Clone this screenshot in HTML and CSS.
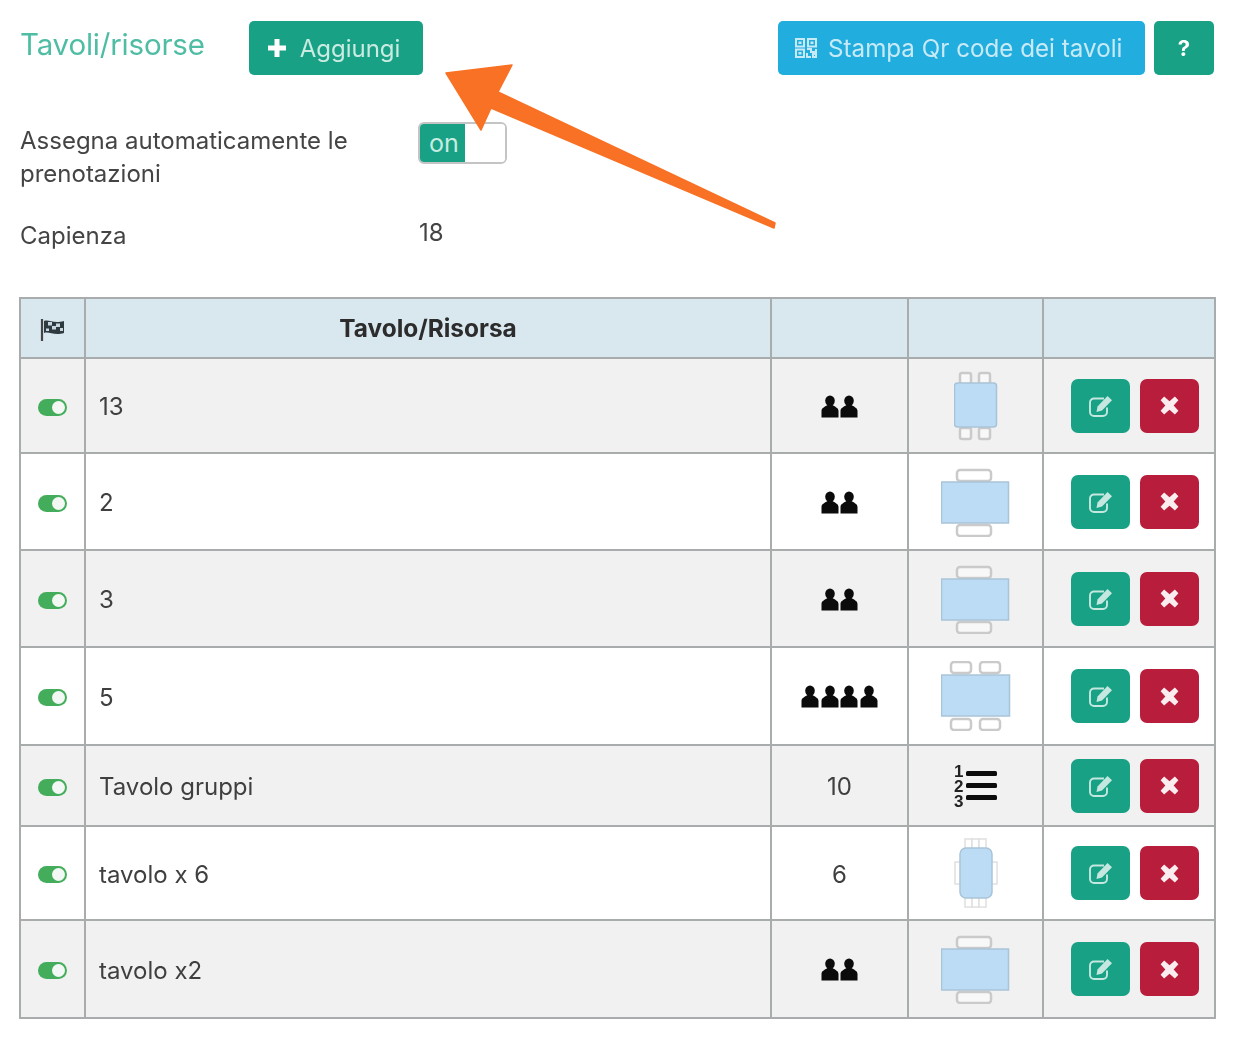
FILE: index.html
```html
<!DOCTYPE html>
<html lang="it">
<head>
<meta charset="utf-8">
<title>Tavoli/risorse</title>
<link rel="stylesheet" href="styles.css">
</head>
<body>
<svg class="defs" width="0" height="0" aria-hidden="true">
  <defs>
    <symbol id="person" viewBox="0 0 18 23"><ellipse cx="9" cy="5.800" rx="4.800" ry="5.400"/><path d="M0.500 22.500 V16 C0.500 13 3.500 12 6.500 10 H11.500 C14.500 12 17.500 13 17.500 16 V22.500 Z"/></symbol>
    <symbol id="edit" viewBox="0 0 26 24"><path d="M19 13.500v4.500a4 4 0 0 1-4 4H6a4 4 0 0 1-4-4V8.500a4 4 0 0 1 4-4h10" fill="none" stroke="currentColor" stroke-width="1.900"/><path d="M9.500 12.500 L19.500 2 L24 6.300 L14 16.500 L8.500 18 Z" fill="currentColor"/></symbol>
    <symbol id="cross" viewBox="0 0 16 16"><path d="M3.500 0.500 L8 4.500 L12.500 0.500 L15.500 3.500 L11.500 8 L15.500 12.500 L12.500 15.500 L8 11.500 L3.500 15.500 L0.500 12.500 L4.500 8 L0.500 3.500 Z" fill="currentColor"/></symbol>
    <symbol id="list" viewBox="0 0 44 44">
      <text x="0" y="13" class="list-num">1</text><text x="0" y="28" class="list-num">2</text><text x="0" y="43" class="list-num">3</text>
      <rect x="12" y="7" width="31" height="5" rx="1.500"/><rect x="12" y="19" width="31" height="5" rx="1.500"/><rect x="12" y="31" width="31" height="5" rx="1.500"/>
    </symbol>
  </defs>
</svg>
<main class="page">
  <header class="top">
    <h1 class="title">Tavoli/risorse</h1>
    <button class="btn btn-green btn-add"><svg class="plus" viewBox="0 0 20 20"><path d="M7.500 1h5v6.500h6.500v5h-6.500v6.500h-5v-6.500H1v-5h6.500z" fill="currentColor"/></svg>Aggiungi</button>
    <span class="spacer"></span>
    <button class="btn btn-blue"><svg class="qr" viewBox="0 0 22 20"><g fill="none" stroke="currentColor" stroke-width="2"><rect x="1" y="1" width="8" height="7.500"/><rect x="13" y="1" width="8" height="7.500"/><rect x="1" y="11.500" width="8" height="7.500"/></g><rect x="3.500" y="3.500" width="3" height="2.500" fill="currentColor"/><rect x="15.500" y="3.500" width="3" height="2.500" fill="currentColor"/><rect x="3.500" y="14" width="3" height="2.500" fill="currentColor"/><path d="M12 11h4v3h5v-3M12 15v4h4M18 16h3v3h-3z" fill="none" stroke="currentColor" stroke-width="2"/></svg>Stampa Qr code dei tavoli</button>
    <button class="btn btn-green btn-help">?</button>
  </header>

  <div class="setting setting-auto">
    <div class="label">Assegna automaticamente le prenotazioni</div>
    <div class="switch"><span class="switch-on">on</span><span class="switch-off"></span></div>
  </div>
  <div class="setting setting-cap">
    <div class="label">Capienza</div>
    <div class="value">18</div>
  </div>

  <table class="grid">
    <colgroup><col class="c1"><col class="c2"><col class="c3"><col class="c4"><col class="c5"></colgroup>
    <thead>
      <tr class="r-head">
        <th><svg class="flag" viewBox="0 0 26 22"><path d="M2 0v22" stroke="#444" stroke-width="2.200"/><path d="M4 2 C9 0 13 5 24 2 L24 14 C14 17 9 12 4 14 Z" fill="#2f3a3f"/><path d="M8 3h4v3.500h-4zM16 4.500h4v3.500h-4zM12 7h4v3.500h-4zM6 9.500h3v2.500h-3zM20 9h3v3h-3z" fill="#c7d6de"/></svg></th>
        <th>Tavolo/Risorsa</th><th></th><th></th><th></th>
      </tr>
    </thead>
    <tbody>
      <tr class="r1 odd">
        <td class="center"><span class="toggle"></span></td><td class="name">13</td>
        <td class="center"><span class="people"><svg><use href="#person"/></svg><svg><use href="#person"/></svg></span></td>
        <td class="center"><svg class="tbl tbl-square" viewBox="0 0 44 70"><g class="chairs"><rect x="6" y="2" width="11" height="11" rx="2"/><rect x="25" y="2" width="11" height="11" rx="2"/><rect x="6" y="57" width="11" height="11" rx="2"/><rect x="25" y="57" width="11" height="11" rx="2"/></g><rect class="top-t" x="0.500" y="12" width="42" height="44" rx="3"/></svg></td>
        <td class="center"><div class="acts"><button class="act act-edit"><svg><use href="#edit"/></svg></button><button class="act act-del"><svg><use href="#cross"/></svg></button></div></td>
      </tr>
      <tr class="r2">
        <td class="center"><span class="toggle"></span></td><td class="name">2</td>
        <td class="center"><span class="people"><svg><use href="#person"/></svg><svg><use href="#person"/></svg></span></td>
        <td class="center"><svg class="tbl" viewBox="0 0 70 70"><g class="chairs"><rect x="16" y="3" width="34" height="11" rx="3"/><rect x="16" y="58" width="34" height="11" rx="3"/></g><rect class="top-t" x="0.500" y="15" width="67" height="41"/></svg></td>
        <td class="center"><div class="acts"><button class="act act-edit"><svg><use href="#edit"/></svg></button><button class="act act-del"><svg><use href="#cross"/></svg></button></div></td>
      </tr>
      <tr class="r3 odd">
        <td class="center"><span class="toggle"></span></td><td class="name">3</td>
        <td class="center"><span class="people"><svg><use href="#person"/></svg><svg><use href="#person"/></svg></span></td>
        <td class="center"><svg class="tbl" viewBox="0 0 70 70"><g class="chairs"><rect x="16" y="3" width="34" height="11" rx="3"/><rect x="16" y="58" width="34" height="11" rx="3"/></g><rect class="top-t" x="0.500" y="15" width="67" height="41"/></svg></td>
        <td class="center"><div class="acts"><button class="act act-edit"><svg><use href="#edit"/></svg></button><button class="act act-del"><svg><use href="#cross"/></svg></button></div></td>
      </tr>
      <tr class="r4">
        <td class="center"><span class="toggle"></span></td><td class="name">5</td>
        <td class="center"><span class="people"><svg><use href="#person"/></svg><svg><use href="#person"/></svg><svg><use href="#person"/></svg><svg><use href="#person"/></svg></span></td>
        <td class="center"><svg class="tbl" viewBox="0 0 70 70"><g class="chairs"><rect x="10" y="1" width="20" height="11" rx="3"/><rect x="39" y="1" width="20" height="11" rx="3"/><rect x="10" y="58" width="20" height="11" rx="3"/><rect x="39" y="58" width="20" height="11" rx="3"/></g><rect class="top-t" x="0.500" y="14" width="68" height="41"/></svg></td>
        <td class="center"><div class="acts"><button class="act act-edit"><svg><use href="#edit"/></svg></button><button class="act act-del"><svg><use href="#cross"/></svg></button></div></td>
      </tr>
      <tr class="r5 odd">
        <td class="center"><span class="toggle"></span></td><td class="name">Tavolo gruppi</td>
        <td class="center name">10</td>
        <td class="center"><svg class="list"><use href="#list"/></svg></td>
        <td class="center"><div class="acts"><button class="act act-edit"><svg><use href="#edit"/></svg></button><button class="act act-del"><svg><use href="#cross"/></svg></button></div></td>
      </tr>
      <tr class="r6">
        <td class="center"><span class="toggle"></span></td><td class="name">tavolo x 6</td>
        <td class="center name">6</td>
        <td class="center"><svg class="tbl tbl-six" viewBox="0 0 44 70"><g class="chairs thin"><rect x="11" y="1" width="7" height="10"/><rect x="18" y="1" width="7" height="10"/><rect x="25" y="1" width="7" height="10"/><rect x="11" y="59" width="7" height="10"/><rect x="18" y="59" width="7" height="10"/><rect x="25" y="59" width="7" height="10"/><rect x="1" y="24" width="6" height="22"/><rect x="37" y="24" width="6" height="22"/></g><rect class="top-t" x="6" y="10" width="32" height="50" rx="6"/></svg></td>
        <td class="center"><div class="acts"><button class="act act-edit"><svg><use href="#edit"/></svg></button><button class="act act-del"><svg><use href="#cross"/></svg></button></div></td>
      </tr>
      <tr class="r7 odd">
        <td class="center"><span class="toggle"></span></td><td class="name">tavolo x2</td>
        <td class="center"><span class="people"><svg><use href="#person"/></svg><svg><use href="#person"/></svg></span></td>
        <td class="center"><svg class="tbl" viewBox="0 0 70 70"><g class="chairs"><rect x="16" y="3" width="34" height="11" rx="3"/><rect x="16" y="58" width="34" height="11" rx="3"/></g><rect class="top-t" x="0.500" y="15" width="67" height="41"/></svg></td>
        <td class="center"><div class="acts"><button class="act act-edit"><svg><use href="#edit"/></svg></button><button class="act act-del"><svg><use href="#cross"/></svg></button></div></td>
      </tr>
    </tbody>
  </table>

  <svg class="arrow" viewBox="0 0 340 170" aria-hidden="true">
    <path d="M334 162 L57 31 L71 4 L5 12 L40 69 L50 47 L333 167 Z" fill="#f87124" stroke="#f87124" stroke-width="1.500" stroke-linejoin="round"/>
  </svg>
</main>
</body>
</html>
```

FILE: styles.css
```css
* { box-sizing: border-box; }
html, body { margin: 0; padding: 0; background: #fff; }
body {
  font-family: Inter, "Noto Sans", "Liberation Sans", sans-serif;
  font-size: 24px;
  color: #3f3f3f;
  height: 1039px;
  overflow: hidden;
}
.defs { position: absolute; }
.page {
  position: relative;
  padding: 21px 24px 0 20px;
  filter: blur(0.75px);
}
.top { display: flex; align-items: flex-start; height: 54px; }
.title {
  margin: 1px 44px 0 0;
  font-size: 29.500px;
  line-height: 44px;
  font-weight: 400;
  color: #4fbda4;
  letter-spacing: -0.2px;
}
.spacer { flex: 1; }
.btn {
  display: inline-flex;
  align-items: center;
  height: 54px;
  border: 0;
  border-radius: 5px;
  font: inherit;
  font-size: 24px;
  color: #c9ebe2;
  padding: 0;
}
.btn-green { background: #18a185; }
.btn-blue { background: #21addd; color: #c8eaf6; width: 367px; padding-left: 17px; margin-right: 9px; font-size: 24.200px; }
.btn-add { width: 174px; padding-left: 18px; }
.btn-help { width: 60px; justify-content: center; color: #fff; font-weight: 700; font-size: 22px; margin-right: 2px; }
.plus { width: 20px; height: 20px; margin-right: 13px; color: #fff; }
.qr { width: 22px; height: 20px; margin-right: 11px; color: #c8eaf6; }

.setting { display: grid; grid-template-columns: 398px auto; }
.setting-auto { margin-top: 46px; height: 95px; }
.setting-cap { height: 81px; }
.label { font-size: 24px; line-height: 33px; width: 345px; padding-top: 3px; color: #444; }
.value { font-size: 24px; line-height: 33px; margin-left: 1px; color: #444; }
.switch {
  display: flex;
  width: 89px;
  height: 42px;
  margin-top: 1px;
  border: 2px solid #c4c4c4;
  border-radius: 6px;
  overflow: hidden;
  justify-self: start;
}
.switch-on { width: 45px; padding-left: 3px; background: #18a185; color: #c9ebe2; text-align: center; line-height: 38px; font-size: 25px; }
.switch-off { flex: 1; background: #fff; }

.grid {
  width: 1195px;
  margin-left: -1px;
  table-layout: fixed;
  border-collapse: collapse;
  font-size: 24px;
}
.c1 { width: 65px; } .c2 { width: 686px; } .c3 { width: 137px; } .c4 { width: 135px; } .c5 { width: 172px; }
.grid th, .grid td { border: 2px solid #a8acad; padding: 0; }
.grid th { background: #d9e7ef; color: #2c2c2c; font-weight: 700; font-size: 24.400px; text-align: center; }
.grid td { padding-left: 13px; vertical-align: middle; }
.grid td.center { padding-left: 0; text-align: center; }
.grid td.name { padding-top: 2px; }
.odd td { background: #f1f1f1; }
.r-head { height: 60px; }
.r1 { height: 95px; } .r2 { height: 97px; } .r3 { height: 97px; } .r4 { height: 98px; }
.r5 { height: 81px; } .r6 { height: 94px; } .r7 { height: 98px; }
.flag { width: 26px; height: 22px; vertical-align: middle; }
.toggle {
  display: inline-block;
  position: relative;
  width: 29px;
  height: 17px;
  border-radius: 9px;
  background: #43ad5b;
  vertical-align: middle;
}
.toggle::after {
  content: "";
  position: absolute;
  right: 2px;
  top: 2px;
  width: 13px;
  height: 13px;
  border-radius: 50%;
  background: #f4f8f4;
}
.people { display: inline-flex; gap: 1.500px; vertical-align: middle; margin-top: -2px; }
.people svg { width: 18px; height: 23px; fill: #0b0b0b; }
.tbl { width: 70px; height: 70px; vertical-align: middle; }
.tbl-square { width: 44px; }
.tbl-six { width: 44px; }
.chairs rect { fill: #fff; stroke: #cacaca; stroke-width: 2.500; }
.odd .chairs rect { fill: #f8f8f8; }
.chairs.thin rect { stroke: #e0e0e0; stroke-width: 1.500; }
.top-t { fill: #bbdcf4; stroke: #a9c4d8; stroke-width: 1.500; }
.list { width: 44px; height: 44px; vertical-align: middle; fill: #0b0b0b; }
.list-num { font-size: 17px; font-weight: 700; font-family: "Liberation Sans", sans-serif; fill: #222; }
.acts { display: flex; justify-content: flex-end; gap: 10px; padding-right: 15px; }
.act {
  display: flex;
  align-items: center;
  justify-content: center;
  height: 54px;
  border: 0;
  border-radius: 7px;
  padding: 0;
  color: #c4e8df;
}
.act-edit { width: 59px; background: #18a185; }
.act-del { width: 59px; background: #b81e3c; color: #fbecef; }
.act-edit svg { width: 26px; height: 24px; }
.act-del svg { width: 19px; height: 19px; }

.arrow {
  position: absolute;
  left: 441px;
  top: 61px;
  width: 340px;
  height: 170px;
}
```
